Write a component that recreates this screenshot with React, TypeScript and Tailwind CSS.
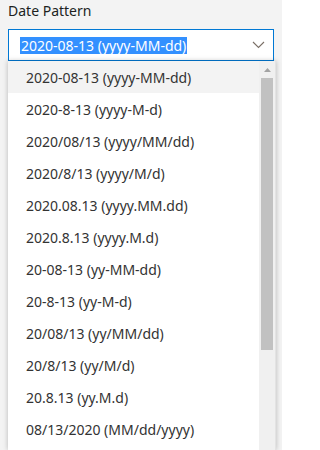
import React from "react";

const items = [
  "2020-08-13 (yyyy-MM-dd)",
  "2020-8-13 (yyyy-M-d)",
  "2020/08/13 (yyyy/MM/dd)",
  "2020/8/13 (yyyy/M/d)",
  "2020.08.13 (yyyy.MM.dd)",
  "2020.8.13 (yyyy.M.d)",
  "20-08-13 (yy-MM-dd)",
  "20-8-13 (yy-M-d)",
  "20/08/13 (yy/MM/dd)",
  "20/8/13 (yy/M/d)",
  "20.8.13 (yy.M.d)",
  "08/13/2020 (MM/dd/yyyy)",
];

export default function App() {
  return (
    <div
      className="relative w-[282px] h-[450px] overflow-hidden bg-[#f3f3f3]"
      style={{ fontFamily: '"Noto Sans", "Open Sans", sans-serif' }}
    >
      <div className="pl-2 pt-[1px] h-[29px] text-[14px] leading-[20px] text-[#201f1e]">
        Date Pattern
      </div>
      <div className="mx-2 h-[32px] border border-[#0078d4] bg-white flex items-center pl-[11px] pr-[8px]">
        <span className="text-[14px] leading-[17px] bg-[#3390ff] text-white px-[1px]">
          2020-08-13 (yyyy-MM-dd)
        </span>
        <svg className="ml-auto" width="13" height="8" viewBox="0 0 13 8">
          <path d="M1 1 L6.5 6.5 L12 1" fill="none" stroke="#7a6f66" strokeWidth="1.1" />
        </svg>
      </div>
      <div className="absolute left-2 top-[61px] w-[268px] bottom-0 bg-white flex shadow-[0_0_5px_rgba(0,0,0,0.25)]">
        <div className="flex-1 overflow-hidden">
          {items.map((t, i) => (
            <div
              key={t}
              className={`h-[32px] flex items-center pl-[18px] text-[14px] text-[#333333] ${
                i === 0 ? "bg-[#f3f3f3]" : ""
              }`}
            >
              {t}
            </div>
          ))}
        </div>
        <div className="w-[17px] bg-[#f0f0f0] flex flex-col items-center border-r border-[#e3e3e3]">
          <svg className="mt-[7px]" width="7" height="4" viewBox="0 0 7 4">
            <path d="M0 4 L3.5 0 L7 4 Z" fill="#a3a3a3" />
          </svg>
          <div className="mt-[6px] w-[12px] h-[272px] bg-[#c1c1c1]" />
        </div>
      </div>
    </div>
  );
}
